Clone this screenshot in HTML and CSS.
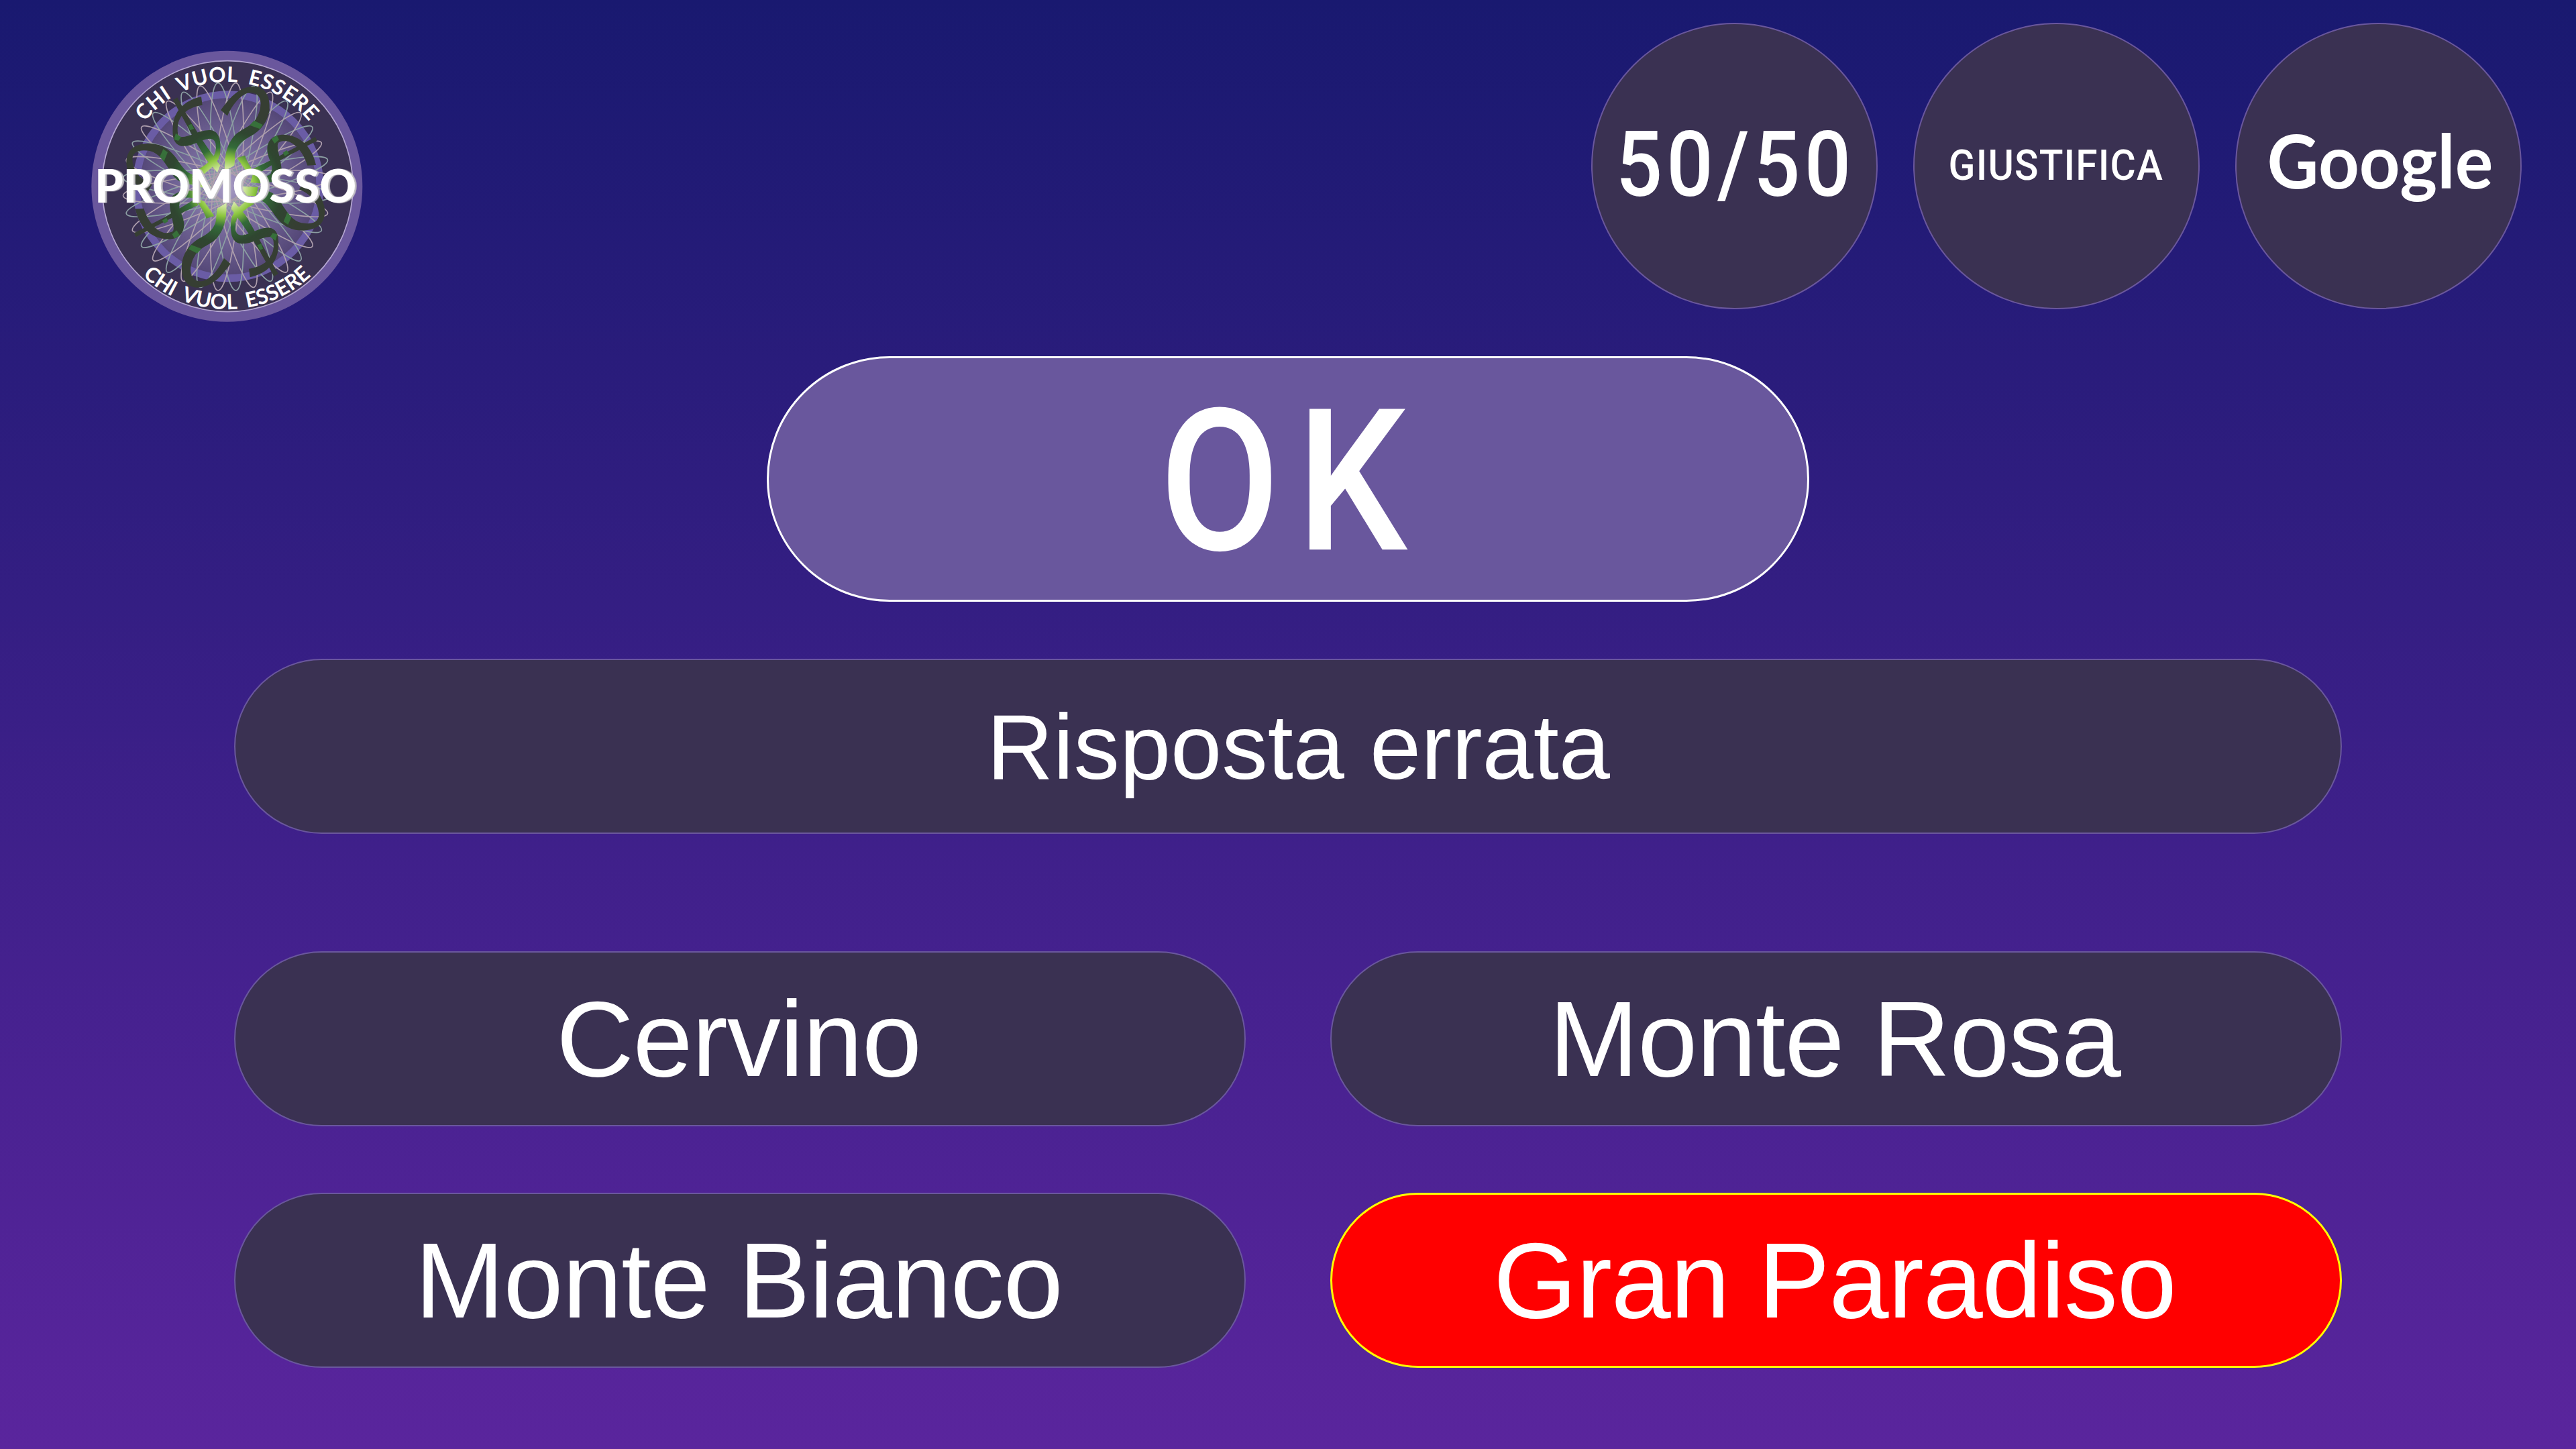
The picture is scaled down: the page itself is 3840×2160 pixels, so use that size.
FILE: index.html
```html
<!DOCTYPE html>
<html lang="it">
<head>
<meta charset="utf-8">
<title>Chi vuol essere promosso</title>
<link rel="stylesheet" href="styles.css">
</head>
<body>
<main class="stage">
  <header class="top">
    <svg class="logo" viewBox="0 0 1320 1320">
      <defs>
        <radialGradient id="glow" gradientUnits="userSpaceOnUse" cx="655" cy="655" r="400">
          <stop offset="0" stop-color="#a79bc4"/><stop offset=".5" stop-color="#75689a"/><stop offset="1" stop-color="#544777"/>
        </radialGradient>
        <radialGradient id="vine" gradientUnits="userSpaceOnUse" cx="649" cy="656" r="450">
          <stop offset=".1" stop-color="#f0f8e0"/><stop offset=".2" stop-color="#c9e295"/><stop offset=".29" stop-color="#8cc63f"/>
          <stop offset=".4" stop-color="#336b38"/><stop offset=".56" stop-color="#2f4630"/><stop offset=".8" stop-color="#363e33"/>
        </radialGradient>
        <path id="arcTop" d="M188 653A467 467 0 0 1 1122 653"/>
        <path id="arcBottom" d="M105 653A550 550 0 0 0 1205 653"/>
        <g id="petals">
          <ellipse cx="655" cy="655" rx="62" ry="466" transform="rotate(-5 655 655)"/>
          <ellipse cx="655" cy="655" rx="62" ry="466" transform="rotate(15 655 655)"/>
          <ellipse cx="655" cy="655" rx="62" ry="466" transform="rotate(35 655 655)"/>
          <ellipse cx="655" cy="655" rx="62" ry="466" transform="rotate(55 655 655)"/>
          <ellipse cx="655" cy="655" rx="62" ry="466" transform="rotate(75 655 655)"/>
          <ellipse cx="655" cy="655" rx="62" ry="466" transform="rotate(95 655 655)"/>
          <ellipse cx="655" cy="655" rx="62" ry="466" transform="rotate(115 655 655)"/>
          <ellipse cx="655" cy="655" rx="62" ry="466" transform="rotate(135 655 655)"/>
          <ellipse cx="655" cy="655" rx="62" ry="466" transform="rotate(155 655 655)"/>
        </g>
        <g id="vines">
          <g fill="url(#vine)">
            <path d="M433 256L413 268C450 330 500 430 560 530L612 592L625 560C560 470 510 400 433 256Z"/>
            <path d="M540 252L545 290C500 297 455 315 437 370C430 410 436 432 450 433C500 430 530 400 580 402C625 405 630 460 624 510C615 550 580 575 553 598L520 580C560 560 600 530 605 490C608 455 600 440 575 440C530 445 500 478 450 473C415 465 410 430 413 385C418 320 460 270 540 252Z"/>
            <path d="M627 312C660 270 700 208 775 206C830 206 850 260 845 310C838 370 800 410 755 432C715 455 692 480 691 520L688 560L645 585C645 520 650 470 690 425C720 395 770 385 788 345C805 320 822 250 775 236C740 225 690 265 657 338Z"/>
            <path d="M300 680L320 645C280 630 232 590 232 530C235 495 270 488 310 495C350 505 372 540 395 575C420 620 440 640 500 645L500 600C470 590 455 565 430 530C400 490 370 462 300 461C240 465 205 490 205 550C210 610 250 660 300 680Z"/>
            <path d="M1050 432L1058 450C980 490 880 540 790 600L770 575C850 540 960 480 1050 432Z"/>
            <path d="M1015 560L1053 558C1040 490 990 420 900 422C850 425 830 460 836 500C842 540 868 560 850 598C830 615 800 607 770 600L760 635C820 645 880 640 896 600C910 560 870 480 885 458C930 430 990 480 1015 560Z"/>
            <path d="M700 526L735 515C745 545 765 575 792 610L745 592Z"/>
            <path d="M712 653L795 656L785 697L745 695Z"/>
          </g>
          <path fill="#37703a" d="M776 359L815 378L803 397L757 380ZM426 416L450 433L438 450L418 444ZM482 380L496 374L508 396L490 402ZM370 487L390 501L373 543L355 520ZM854 440L878 425L888 445L868 462ZM905 503L922 492L933 506L914 518Z"/>
        </g>
      </defs>
      <circle cx="655" cy="653" r="606" fill="#6a579d"/>
      <circle cx="657" cy="653" r="561" fill="#3a3152" stroke="#b5a7d2" stroke-width="5"/>
      <circle cx="660" cy="653" r="411" fill="url(#glow)" stroke="#6a5ca5" stroke-width="33"/>
      <use href="#petals" fill="none" stroke="#8c9fa3" stroke-width="5"/>
      <use href="#petals" fill="none" stroke="#ae9fad" stroke-width="5" transform="rotate(10 655 655)"/>
      <use href="#vines"/>
      <use href="#vines" transform="rotate(180 649 656)"/>
      <text class="arc arc-top"><textPath href="#arcTop" startOffset="50%">CHI VUOL ESSERE</textPath></text>
      <text class="arc"><textPath href="#arcBottom" startOffset="50%">CHI VUOL ESSERE</textPath></text>
      <text class="wordmark" x="64" y="727" textLength="1170" lengthAdjust="spacingAndGlyphs">PROMOSSO</text>
    </svg>
    <nav class="helps">
      <button class="help"><svg class="face" viewBox="0 0 427 427"><text class="din half" transform="translate(35 258) scale(.9 1)" textLength="393">50/50</text></svg></button>
      <button class="help"><svg class="face" viewBox="0 0 427 427"><text class="din justify" transform="translate(51 234) scale(.94 1)" textLength="343">GIUSTIFICA</text></svg></button>
      <button class="help"><svg class="face" viewBox="0 0 427 427"><text class="google" x="46" y="247" textLength="340" lengthAdjust="spacingAndGlyphs">Google</text></svg></button>
    </nav>
  </header>
  <button class="pill ok"><svg class="face" viewBox="0 0 1553 366"><text class="din okay" transform="translate(582 290) scale(.88 1)" textLength="426">OK</text></svg></button>
  <section class="pill question"><span>Risposta errata</span></section>
  <section class="answers">
    <button class="pill answer">Cervino</button>
    <button class="pill answer">Monte Rosa</button>
    <button class="pill answer">Monte Bianco</button>
    <button class="pill answer wrong">Gran Paradiso</button>
  </section>
</main>
</body>
</html>
```
FILE: styles.css
```css
* { box-sizing: border-box; }
body { margin: 0; }
.stage {
  width: 3840px;
  height: 2160px;
  display: flex;
  flex-direction: column;
  align-items: center;
  overflow: hidden;
  color: #fff;
  font-family: "Liberation Sans", Arial, sans-serif;
  background: linear-gradient(#191970, #5a259d);
}
button {
  padding: 0;
  margin: 0;
  color: inherit;
  font: inherit;
}
.top {
  width: 100%;
  height: 531px;
  padding: 34px 81px 0 120px;
  display: flex;
  justify-content: space-between;
  align-items: flex-start;
}
.logo { width: 440px; height: 440px; margin-top: 26px; }
.helps { display: flex; gap: 53px; }
.help {
  width: 427px;
  height: 427px;
  border: 2px solid #6a579d;
  border-radius: 50%;
  background: #3a3152;
}
.face { display: block; width: 100%; height: 100%; overflow: visible; }
.face text, .logo text { fill: #fff; }
.din { font-family: Roboto, sans-serif; font-weight: 500; }
.half { font-size: 137px; }
.justify { font-size: 63px; }
.okay { font-size: 300px; }
.google { font-family: Lato, sans-serif; font-weight: 700; font-size: 112px; }
.arc {
  font: 700 94px Lato, sans-serif;
  text-anchor: middle;
  word-spacing: 22px;
}
.arc-top { letter-spacing: 1px; }
.wordmark {
  font: 900 203px Lato, sans-serif;
  filter: drop-shadow(8px 1px 0 #c5c3c6);
}
.pill {
  display: flex;
  align-items: center;
  justify-content: center;
  border: 2px solid #6a579d;
  border-radius: 183px;
  background: #3a3152;
  white-space: nowrap;
}
.ok {
  width: 1554px;
  height: 366px;
  border: 3px solid #fff;
  background: #69579d;
}
.question {
  width: 3142px;
  height: 261px;
  margin-top: 85px;
  padding: 2px 0 0 31px;
  font-size: 137px;
}
.answers {
  width: 3142px;
  margin-top: 175px;
  display: grid;
  grid-template-columns: 1508px 1508px;
  justify-content: space-between;
  row-gap: 99px;
}
.answer { height: 261px; padding-right: 4px; font-size: 160px; letter-spacing: -1.1px; }
.wrong { border: 3px solid #ff0; background: #f00; }
```
